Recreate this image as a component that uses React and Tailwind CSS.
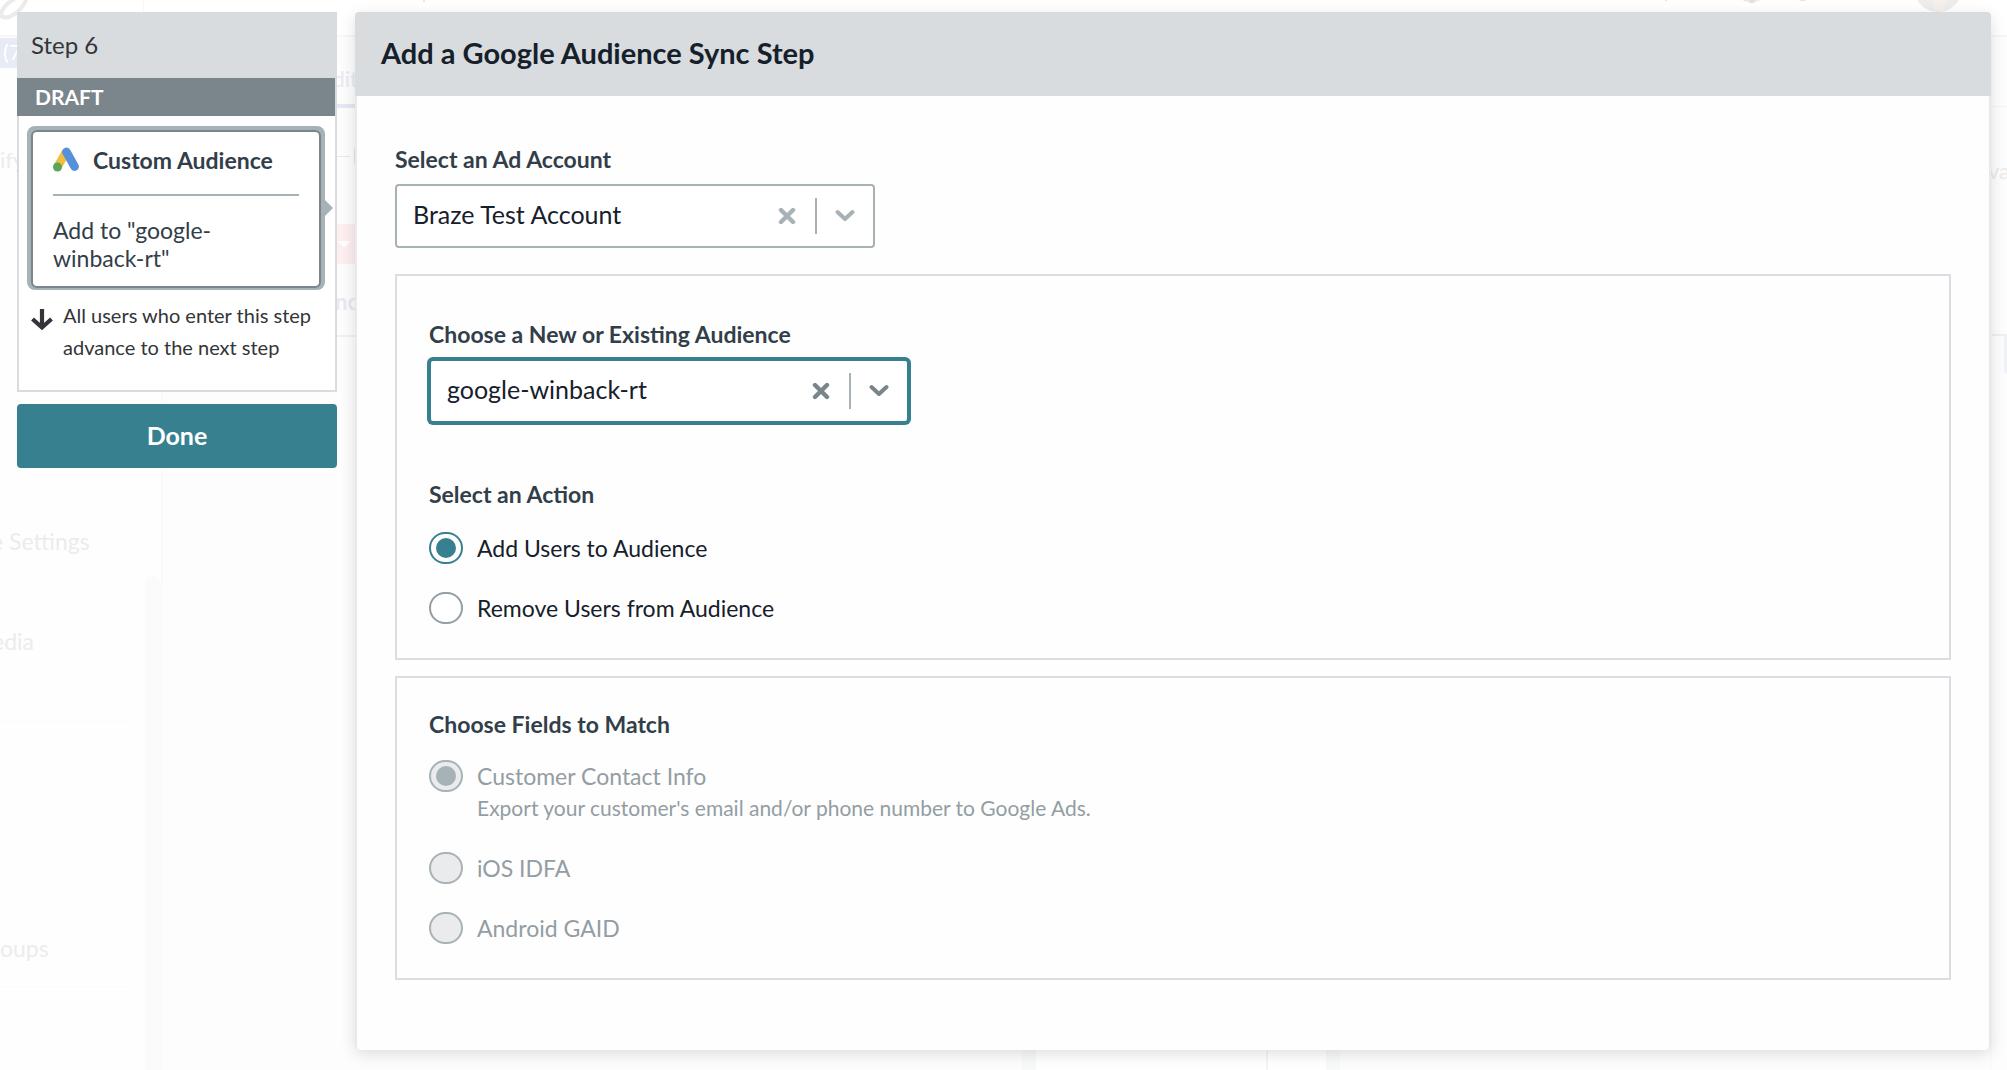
import { useState } from "react";

const FONT = "font-['Lato','Open_Sans',sans-serif]";

function GoogleAdsIcon() {
  return (
    <svg width="26" height="26" viewBox="0 0 26 26" fill="none" aria-hidden="true" className="shrink-0">
      <path d="M13 5L4.5 20" stroke="#f3bd42" strokeWidth="8.6" />
      <path d="M13.4 4.9L21.6 19.6" stroke="#5590da" strokeWidth="8.6" strokeLinecap="round" />
      <circle cx="4.5" cy="20" r="4.5" fill="#5ba55b" />
    </svg>
  );
}

function CloseIcon() {
  return (
    <svg width="18" height="18" viewBox="0 0 18 18" fill="none" aria-hidden="true">
      <path d="M3 3L15 15M15 3L3 15" stroke="currentColor" strokeWidth="4.4" strokeLinecap="round" />
    </svg>
  );
}

function ChevronIcon() {
  return (
    <svg width="20" height="14" viewBox="0 0 20 14" fill="none" aria-hidden="true">
      <path d="M2.5 3L10 10L17.5 3" stroke="currentColor" strokeWidth="4" strokeLinecap="round" strokeLinejoin="round" />
    </svg>
  );
}

function ArrowDownIcon() {
  return (
    <svg width="22" height="24" viewBox="0 0 22 24" fill="none" aria-hidden="true" className="shrink-0">
      <path d="M11 1V20M1.500 11L11 19.500L20.500 11" stroke="#333538" strokeWidth="4.2" />
    </svg>
  );
}

function SelectBox({ id, options, active }) {
  const [value, setValue] = useState(options[0]);
  const frame = active
    ? "border-[#37808f] ring-2 ring-[#37808f] text-[#7a858b]"
    : "border-[#a7b2b6] text-[#a7b2b6]";
  return (
    <div className={`flex h-16 w-full max-w-[480px] items-center rounded-sm border-2 bg-white ${frame}`}>
      <select
        id={id}
        value={value}
        onChange={(e) => setValue(e.target.value)}
        className="h-full min-w-0 flex-1 appearance-none bg-transparent pb-0.5 pl-4 text-[25px] text-[#16202b] outline-none"
      >
        <option value="" />
        {options.map((option) => (
          <option key={option}>{option}</option>
        ))}
      </select>
      <button type="button" aria-label="Clear" onClick={() => setValue("")} className="mr-[19px]">
        <CloseIcon />
      </button>
      <span className="h-9 w-0.5 bg-[#a7b2b6]" />
      <span className="px-[18px]">
        <ChevronIcon />
      </span>
    </div>
  );
}

function RadioOption({ name, label, description, ...input }) {
  return (
    <div>
      <label className="flex h-8 items-center gap-3.5 text-[23px] text-[#16202b] has-disabled:text-[#939da3]">
        <input
          type="radio"
          name={name}
          {...input}
          className="grid h-8 w-[34px] shrink-0 appearance-none place-content-center rounded-full border-2 border-[#949da3] bg-white before:block before:size-5 before:rounded-full checked:border-[#37808f] checked:before:bg-[#37808f] disabled:border-[#a7b2b6] disabled:bg-[#e9ebed] disabled:checked:before:bg-[#a7b2b6]"
        />
        {label}
      </label>
      {description && <p className="pl-12 text-[21px] leading-8 text-[#939da3]">{description}</p>}
    </div>
  );
}

/* The faded campaign editor that shows round the edges of the dialog. */
function FadedPage() {
  return (
    <div aria-hidden="true" className="absolute inset-0 flex flex-col overflow-hidden bg-[#fdfdfd] text-[22px] leading-8">
      <div className="flex h-[37px] shrink-0 items-start border-b-2 border-[#f7f7f7] bg-white">
        <div className="flex h-full w-36 border-r border-[#f7f7f7]">
          <svg width="30" height="20" viewBox="0 0 30 20" fill="none">
            <path d="M0 15C3 18 6 18 9 17C17 14 24 6 26 0C27 -5 21 -5 16 -2C8 2 2 8 1 15" stroke="#ebebeb" strokeWidth="4" />
          </svg>
        </div>
        <svg width="12" height="4" viewBox="0 0 12 4" className="ml-[275px]">
          <path d="M4 0H6V2H4Z" fill="#e8e8e8" />
        </svg>
        <svg width="350" height="12" viewBox="0 0 350 12" fill="none" className="ml-auto">
          <path d="M9 0V1" stroke="#e4e4e4" strokeWidth="2" />
          <path d="M86 0H89L91 2L87 1ZM90 0H100L97 3H93ZM101 0H103L99 2Z" fill="#e2e2e2" />
          <path d="M142 0H150L147 1H144Z" fill="#e4e4e4" />
          <circle cx="281" cy="-12" r="24" fill="#ededed" />
          <path d="M276 0H290L286 11H278Z" fill="#f6f0ec" />
        </svg>
      </div>
      <div className="flex min-h-0 flex-1">
        <div className="flex w-[163px] shrink-0 flex-col border-r-2 border-[#fafafa] bg-[#fefefe] text-[#ececec]">
          <div className="mt-px h-[30px] w-full bg-[#e6ebf5] pl-[3px] leading-[28px] text-white">(7</div>
          <div className="mt-[76px]">ify</div>
          <div className="flex flex-1 justify-between pt-[349px]">
            <div className="whitespace-nowrap">
              <div className="-ml-[9px] text-[23px]">e Settings</div>
              <div className="-ml-2 mt-[68px] text-[23px]">edia</div>
              <div className="mt-[64px] w-[133px] border-t border-[#fbfbfb]" />
              <div className="mt-[210px] text-[23px]">oups</div>
              <div className="mt-[22px] w-[133px] border-t border-[#fbfbfb]" />
            </div>
            <div className="mt-[51px] w-4 rounded-t-full bg-[#fbfbfb]" />
          </div>
        </div>
        <div className="flex min-w-0 flex-1 justify-between">
          <div className="flex w-[195px] flex-col text-right text-[#e8eaf2]">
            <div className="pt-[26px]">Edit</div>
            <div className="mt-[9px] h-1 bg-[#e4e8f3]" />
            <div className="mt-9 flex h-6 items-center">
              <span className="flex-1 border-t border-[#eaeaea]" />
              <span className="ml-1 h-5 w-1 rounded-l-full border-l-2 border-[#e4e4e4]" />
            </div>
            <div className="mt-14 flex h-10 items-center justify-end bg-[#fdefef] pr-2">
              <svg width="12" height="7" viewBox="0 0 12 7">
                <path d="M0 0H12L6 7Z" fill="#ffffff" />
              </svg>
            </div>
            <div className="mt-[22px] font-bold">Sync</div>
            <div className="mt-[17px] border-t-2 border-[#eff0f6]" />
          </div>
          <div className="flex flex-1 items-end pl-[664px]">
            <div className="flex h-[50px] w-[318px] justify-end border-x-[14px] border-[#f8faf9] bg-white">
              <span className="mr-[58px] border-l-2 border-[#f5f5f5]" />
            </div>
          </div>
          <div className="flex w-4 flex-col border-l border-[#fafafa] text-[#ebebeb]">
            <div className="mt-[69px] border-t border-[#f5f5f5]" />
            <div className="mt-[48px] -ml-1">va</div>
            <div className="mt-[147px] border-t-2 border-[#eff0f6]" />
            <div className="ml-3 h-[38px] rounded-bl bg-[#f1f1f8]" />
          </div>
        </div>
      </div>
    </div>
  );
}

function StepCard() {
  return (
    <section>
      <h2 className="flex h-[66px] items-center bg-[#d8dcdf] pl-3.5 text-[24px] text-[#333538]">Step 6</h2>
      <div className="border-r-2 border-[#d8dcdf]">
        <p className="bg-[#7a858c] pl-[18px] text-[21px] leading-[38px] font-bold text-white">DRAFT</p>
      </div>
      <div className="border-2 border-t-0 border-[#d8dcdf] bg-white pt-2.5 pr-2.5 pb-[27px] pl-2">
        <div className="relative rounded-lg bg-[#a7b2b6] p-1 pb-0.5">
          <div className="rounded-md border-2 border-[#7a858c] bg-white px-5 pt-3.5 pb-3.5 text-[23px] leading-7 text-[#323e49]">
            <h3 className="flex items-center gap-3.5 border-b-2 border-[#a7b2b6] pb-5 font-bold">
              <GoogleAdsIcon />
              Custom Audience
            </h3>
            <p className="pt-5">
              Add to "google-
              <br />
              winback-rt"
            </p>
          </div>
          <svg width="8" height="16" viewBox="0 0 8 16" aria-hidden="true" className="absolute top-1/2 left-full -translate-y-1/2">
            <path d="M0 0L8 8L0 16Z" fill="#a7b2b6" />
          </svg>
        </div>
        <p className="mt-[9px] flex gap-2.5 pl-1 text-[20px] leading-8 whitespace-nowrap text-[#333538]">
          <span className="pt-[9px]">
            <ArrowDownIcon />
          </span>
          <span>
            All users who enter this step
            <br />
            advance to the next step
          </span>
        </p>
      </div>
    </section>
  );
}

const labelStyle = "mb-[11px] block text-[23px] leading-7 font-bold text-[#323e49]";

export default function App() {
  const [action, setAction] = useState("add");
  return (
    <div className={`relative min-h-screen overflow-hidden ${FONT}`}>
      <FadedPage />
      <div className="relative flex items-start gap-[18px] pt-3 pr-4 pb-5 pl-[17px]">
        <aside className="w-80 shrink-0">
          <StepCard />
          <button type="button" className="mt-3 h-16 w-full rounded-sm bg-[#37808f] text-[25px] font-bold text-white">
            Done
          </button>
        </aside>

        <main className="min-w-0 flex-1 rounded-md bg-[#e9e9ea] shadow-[0_4px_16px_rgba(0,0,0,0.13)]">
          <h1 className="flex h-[84px] items-center rounded-t bg-[#d8dcdf] px-[26px] pb-0.5 text-[29px] font-bold text-[#16202b]">
            Add a Google Audience Sync Step
          </h1>
          <form className="mx-0.5 rounded-b bg-[#fefefe] px-[38px] pt-[49px] pb-[70px]">
            <label htmlFor="account" className={labelStyle}>
              Select an Ad Account
            </label>
            <SelectBox id="account" options={["Braze Test Account"]} />

            <section className="mt-[26px] border-2 border-[#dcdce2] px-8 pt-11 pb-[34px]">
              <label htmlFor="audience" className={labelStyle}>
                Choose a New or Existing Audience
              </label>
              <SelectBox id="audience" options={["google-winback-rt"]} active />
              <fieldset className="mt-[57px]">
                <legend className="mb-6 text-[23px] leading-7 font-bold text-[#323e49]">Select an Action</legend>
                <div className="flex flex-col gap-7">
                  <RadioOption
                    name="action"
                    label="Add Users to Audience"
                    checked={action === "add"}
                    onChange={() => setAction("add")}
                  />
                  <RadioOption
                    name="action"
                    label="Remove Users from Audience"
                    checked={action === "remove"}
                    onChange={() => setAction("remove")}
                  />
                </div>
              </fieldset>
            </section>

            <section className="mt-4 border-2 border-[#dcdce2] px-8 pt-8 pb-[34px]">
              <fieldset>
                <legend className="mb-[22px] text-[23px] leading-7 font-bold text-[#323e49]">
                  Choose Fields to Match
                </legend>
                <div className="flex flex-col gap-7">
                  <RadioOption
                    name="field"
                    label="Customer Contact Info"
                    description="Export your customer's email and/or phone number to Google Ads."
                    defaultChecked
                    disabled
                  />
                  <RadioOption name="field" label="iOS IDFA" disabled />
                  <RadioOption name="field" label="Android GAID" disabled />
                </div>
              </fieldset>
            </section>
          </form>
        </main>
      </div>
    </div>
  );
}
